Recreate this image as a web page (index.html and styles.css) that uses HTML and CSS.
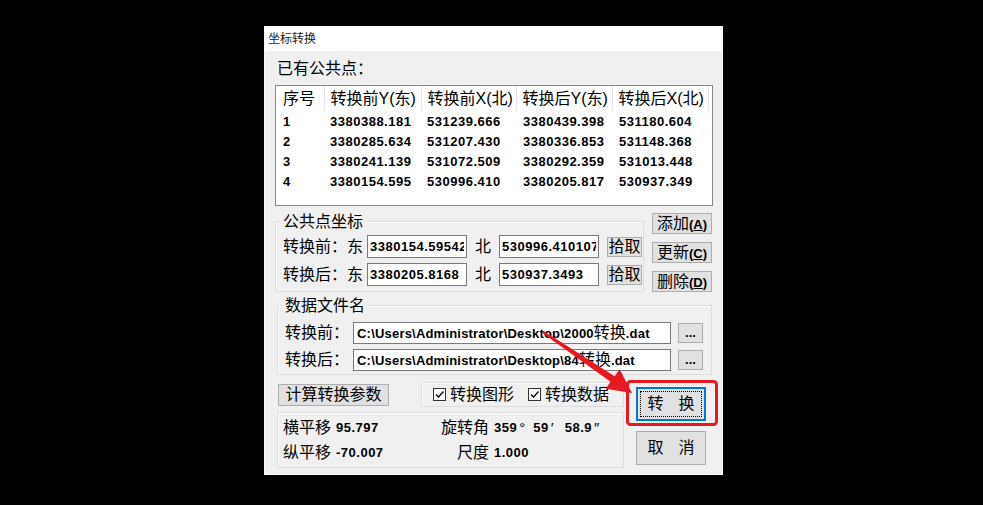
FILE: index.html
```html
<!DOCTYPE html>
<html lang="zh-cn">
<head>
<meta charset="utf-8" />
<title>坐标转换</title>
<link rel="stylesheet" href="styles.css">
</head>
<body>
<!-- S 对话框 -->
<div class="win">
	<div class="win_title">坐标转换</div>
	<div class="win_body">
		<p class="cap">已有公共点：</p>
		<!-- S 公共点列表 -->
		<div class="list">
			<table>
				<colgroup><col class="w1" /><col class="w2" /><col class="w3" /><col class="w4" /><col class="w5" /></colgroup>
				<thead>
					<tr><th class="first">序号</th><th>转换前Y(东)</th><th>转换前X(北)</th><th>转换后Y(东)</th><th>转换后X(北)</th></tr>
				</thead>
				<tbody>
					<tr><td class="first">1</td><td>3380388.181</td><td>531239.666</td><td class="c4">3380439.398</td><td class="c4">531180.604</td></tr>
					<tr><td class="first">2</td><td>3380285.634</td><td>531207.430</td><td class="c4">3380336.853</td><td class="c4">531148.368</td></tr>
					<tr><td class="first">3</td><td>3380241.139</td><td>531072.509</td><td class="c4">3380292.359</td><td class="c4">531013.448</td></tr>
					<tr><td class="first">4</td><td>3380154.595</td><td>530996.410</td><td class="c4">3380205.817</td><td class="c4">530937.349</td></tr>
				</tbody>
			</table>
		</div>
		<!-- E 公共点列表 -->
		<div class="mid">
			<!-- S 公共点坐标 -->
			<div class="grp grp_point">
				<span class="grp_tit">公共点坐标</span>
				<div class="row">
					<span class="lab">转换前：东</span>
					<input class="txt txt_num" type="text" value="3380154.595421" />
					<span class="lab_n">北</span>
					<input class="txt txt_num" type="text" value="530996.4101073" />
					<button class="bt bt_pick">拾取</button>
				</div>
				<div class="row">
					<span class="lab">转换后：东</span>
					<input class="txt txt_num" type="text" value="3380205.8168" />
					<span class="lab_n">北</span>
					<input class="txt txt_num" type="text" value="530937.3493" />
					<button class="bt bt_pick">拾取</button>
				</div>
			</div>
			<!-- E 公共点坐标 -->
			<div class="side">
				<button class="bt bt_side">添加<b>(<u>A</u>)</b></button>
				<button class="bt bt_side">更新<b>(<u>C</u>)</b></button>
				<button class="bt bt_side">删除<b>(<u>D</u>)</b></button>
			</div>
		</div>
		<!-- S 数据文件名 -->
		<div class="grp grp_file">
			<span class="grp_tit">数据文件名</span>
			<div class="row">
				<span class="lab">转换前：</span>
				<div class="txt txt_path">C:\Users\Administrator\Desktop\2000<span class="cn">转换</span>.dat</div>
				<button class="bt bt_more">...</button>
			</div>
			<div class="row">
				<span class="lab">转换后：</span>
				<div class="txt txt_path">C:\Users\Administrator\Desktop\84<span class="cn">转换</span>.dat</div>
				<button class="bt bt_more">...</button>
			</div>
		</div>
		<!-- E 数据文件名 -->
		<div class="foot">
			<div class="foot_l">
				<div class="foot_top">
					<button class="bt bt_calc">计算转换参数</button>
					<div class="chk_box">
						<span class="chk"><svg width="11" height="11" viewBox="0 0 11 11"><path d="M2 5.5 L4.5 8 L9.5 2.5" fill="none" stroke="#000" stroke-width="1.3" /></svg></span>
						<span class="chk_txt">转换图形</span>
						<span class="chk chk2"><svg width="11" height="11" viewBox="0 0 11 11"><path d="M2 5.5 L4.5 8 L9.5 2.5" fill="none" stroke="#000" stroke-width="1.3" /></svg></span>
						<span class="chk_txt">转换数据</span>
					</div>
				</div>
				<!-- S 转换参数 -->
				<div class="result">
					<span>横平移</span><span class="val">95.797</span>
					<span class="lab_r">旋转角</span><span class="val">359<i class="sym">°</i>59<i class="sym">′</i>58.9<i class="sym">″</i></span>
					<span>纵平移</span><span class="val">-70.007</span>
					<span class="lab_r">尺度</span><span class="val">1.000</span>
				</div>
				<!-- E 转换参数 -->
			</div>
			<div class="foot_r">
				<button class="bt bt_big bt_focus"><span class="focus"><span>转</span><span>换</span></span></button>
				<button class="bt bt_big"><span class="focus_no"><span>取</span><span>消</span></span></button>
			</div>
		</div>
	</div>
</div>
<!-- E 对话框 -->
<!-- S 标注 -->
<svg class="mark" width="983" height="505" viewBox="0 0 983 505">
	<rect x="627.5" y="381.5" width="89" height="43" rx="3" fill="none" stroke="#e5191f" stroke-width="3" />
	<polygon points="543.7,331 614.6,376.2 619.6,369.3 632,393 605.6,388.7 610.6,381.8 542.3,333" fill="#e5191f" />
</svg>
<!-- E 标注 -->
</body>
</html>
```

FILE: styles.css
```css
html,body{margin:0;padding:0;background:#000000;}
body{width:983px;height:505px;overflow:hidden;position:relative;font-family:"Liberation Sans","Noto Sans CJK SC",sans-serif;font-size:16px;color:#000000;line-height:1;}
p{margin:0;}
button,input{font-family:inherit;color:#000000;}

/* S 窗口 */
.win{width:459px;height:449px;margin:26px 0 0 264px;box-sizing:border-box;border:1px solid #fbfbfb;background-color:#F0F0F0;}
.win_title{height:24px;padding-left:3px;background-color:#FFFFFF;font-size:12px;line-height:24px;color:#1a1a1a;}
.win_body{position:relative;}
.cap{padding:9px 0 0 12px;height:17px;line-height:17px;}
/* E 窗口 */

/* S 列表 */
.list{width:438px;height:121px;margin:8px 0 0 10px;box-sizing:border-box;border:1px solid #828790;background-color:#FFFFFF;overflow:hidden;}
.list table{width:432px;table-layout:fixed;border-collapse:collapse;}
.list .w1{width:48px;}
.list .w2{width:97px;}
.list .w3{width:95px;}
.list .w4{width:96px;}
.list .w5{width:96px;}
.list th{height:25px;padding:0 0 0 6px;border-right:1px solid #E5E5E5;font-weight:normal;font-size:16px;text-align:left;white-space:nowrap;}
.list td{height:20px;padding:0 0 0 6px;font-weight:bold;font-size:13px;letter-spacing:.5px;white-space:nowrap;}
.list .first{padding-left:7px;}
.list .c4{padding-left:7px;}
/* E 列表 */

/* S 分组框 */
.grp{box-sizing:border-box;border:1px solid #DCDCDC;box-shadow:inset 1px 1px 0 #FFFFFF;}
.grp_tit{display:block;width:fit-content;height:17px;margin:-9px 0 0 4px;padding:0 3px;background-color:#F0F0F0;line-height:17px;}
.row{display:flex;align-items:center;padding-left:7px;}
.lab{white-space:nowrap;}
.txt{box-sizing:border-box;height:23px;border:1px solid #7A7A7A;background-color:#FFFFFF;}
.txt_num{width:100px;margin:0 0 0 4px;padding:0 2px;font-weight:bold;font-size:13px;letter-spacing:.5px;outline:none;}
.lab_n{margin:0 4px 0 8px;}
.mid{display:flex;margin:7px 0 0 10px;}
.grp_point{width:369px;margin-top:8px;padding-bottom:4px;}
.grp_point .row{margin-top:5px;}
.grp_file{width:435px;margin:13px 0 0 12px;padding-bottom:3px;}
.grp_file .row{margin-top:5px;}
.grp_file .row:nth-of-type(1){margin-top:8px;}
.txt_path{width:318px;height:22px;margin-left:4px;padding-left:3px;font-weight:bold;font-size:13px;letter-spacing:.2px;line-height:20px;white-space:nowrap;overflow:hidden;}
.txt_path .cn{font-size:16px;font-weight:normal;letter-spacing:0;}
/* E 分组框 */

/* S 按钮 */
.bt{box-sizing:border-box;margin:0;padding:0;border:1px solid #ADADAD;background-color:#E1E1E1;font-size:16px;line-height:1;white-space:nowrap;cursor:pointer;}
.bt b{font-size:13px;}
.bt_pick{width:35px;height:20px;margin-left:8px;}
.side{display:flex;flex-direction:column;gap:8px;margin-left:8px;}
.bt_side{width:60px;height:21px;}
.bt_more{width:25px;height:20px;margin-left:7px;font-weight:bold;font-size:13px;line-height:12px;}
.bt_calc{width:111px;height:22px;margin-left:1px;}
.bt_big{display:flex;align-items:center;justify-content:center;width:70px;height:34px;}
.bt_big .focus,
.bt_big .focus_no{display:flex;justify-content:center;align-items:center;gap:15px;width:62px;height:26px;box-sizing:border-box;}
.bt_focus{border:2px solid #0078D7;}
.bt_focus .focus{border:1px dotted #000000;}
/* E 按钮 */

/* S 底部 */
.foot{display:flex;margin:6px 0 0 12px;}
.foot_l{width:348px;padding-top:1px;}
.foot_top{display:flex;align-items:center;height:25px;}
.chk_box{display:flex;align-items:center;box-sizing:border-box;width:203px;height:25px;margin:0 1px 0 auto;padding-left:11px;border:1px solid #DCDCDC;box-shadow:inset 1px 1px 0 #FFFFFF;}
.chk{display:flex;align-items:center;justify-content:center;box-sizing:border-box;width:13px;height:13px;border:1px solid #333333;background-color:#FFFFFF;}
.chk2{margin-left:14px;}
.chk_txt{margin-left:4px;}
.result{display:grid;grid-template-columns:48px 110px 48px 1fr;grid-auto-rows:25px;align-items:center;box-sizing:border-box;width:347px;height:56px;margin-top:5px;padding:2px 0 0 5px;border:1px solid #DCDCDC;box-shadow:inset 1px 1px 0 #FFFFFF;}
.result .val{padding-left:5px;font-weight:bold;font-size:13px;letter-spacing:.5px;white-space:nowrap;}
.result .lab_r{text-align:right;white-space:nowrap;}
.result .sym{display:inline-block;width:16px;padding-left:2px;box-sizing:border-box;font-style:normal;font-weight:normal;font-size:15px;text-align:left;vertical-align:top;line-height:13px;}
.foot_r{display:flex;flex-direction:column;gap:10px;margin-left:11px;padding-top:6px;}
/* E 底部 */

/* S 标注 */
.mark{position:absolute;left:0;top:0;pointer-events:none;}
/* E 标注 */
```
